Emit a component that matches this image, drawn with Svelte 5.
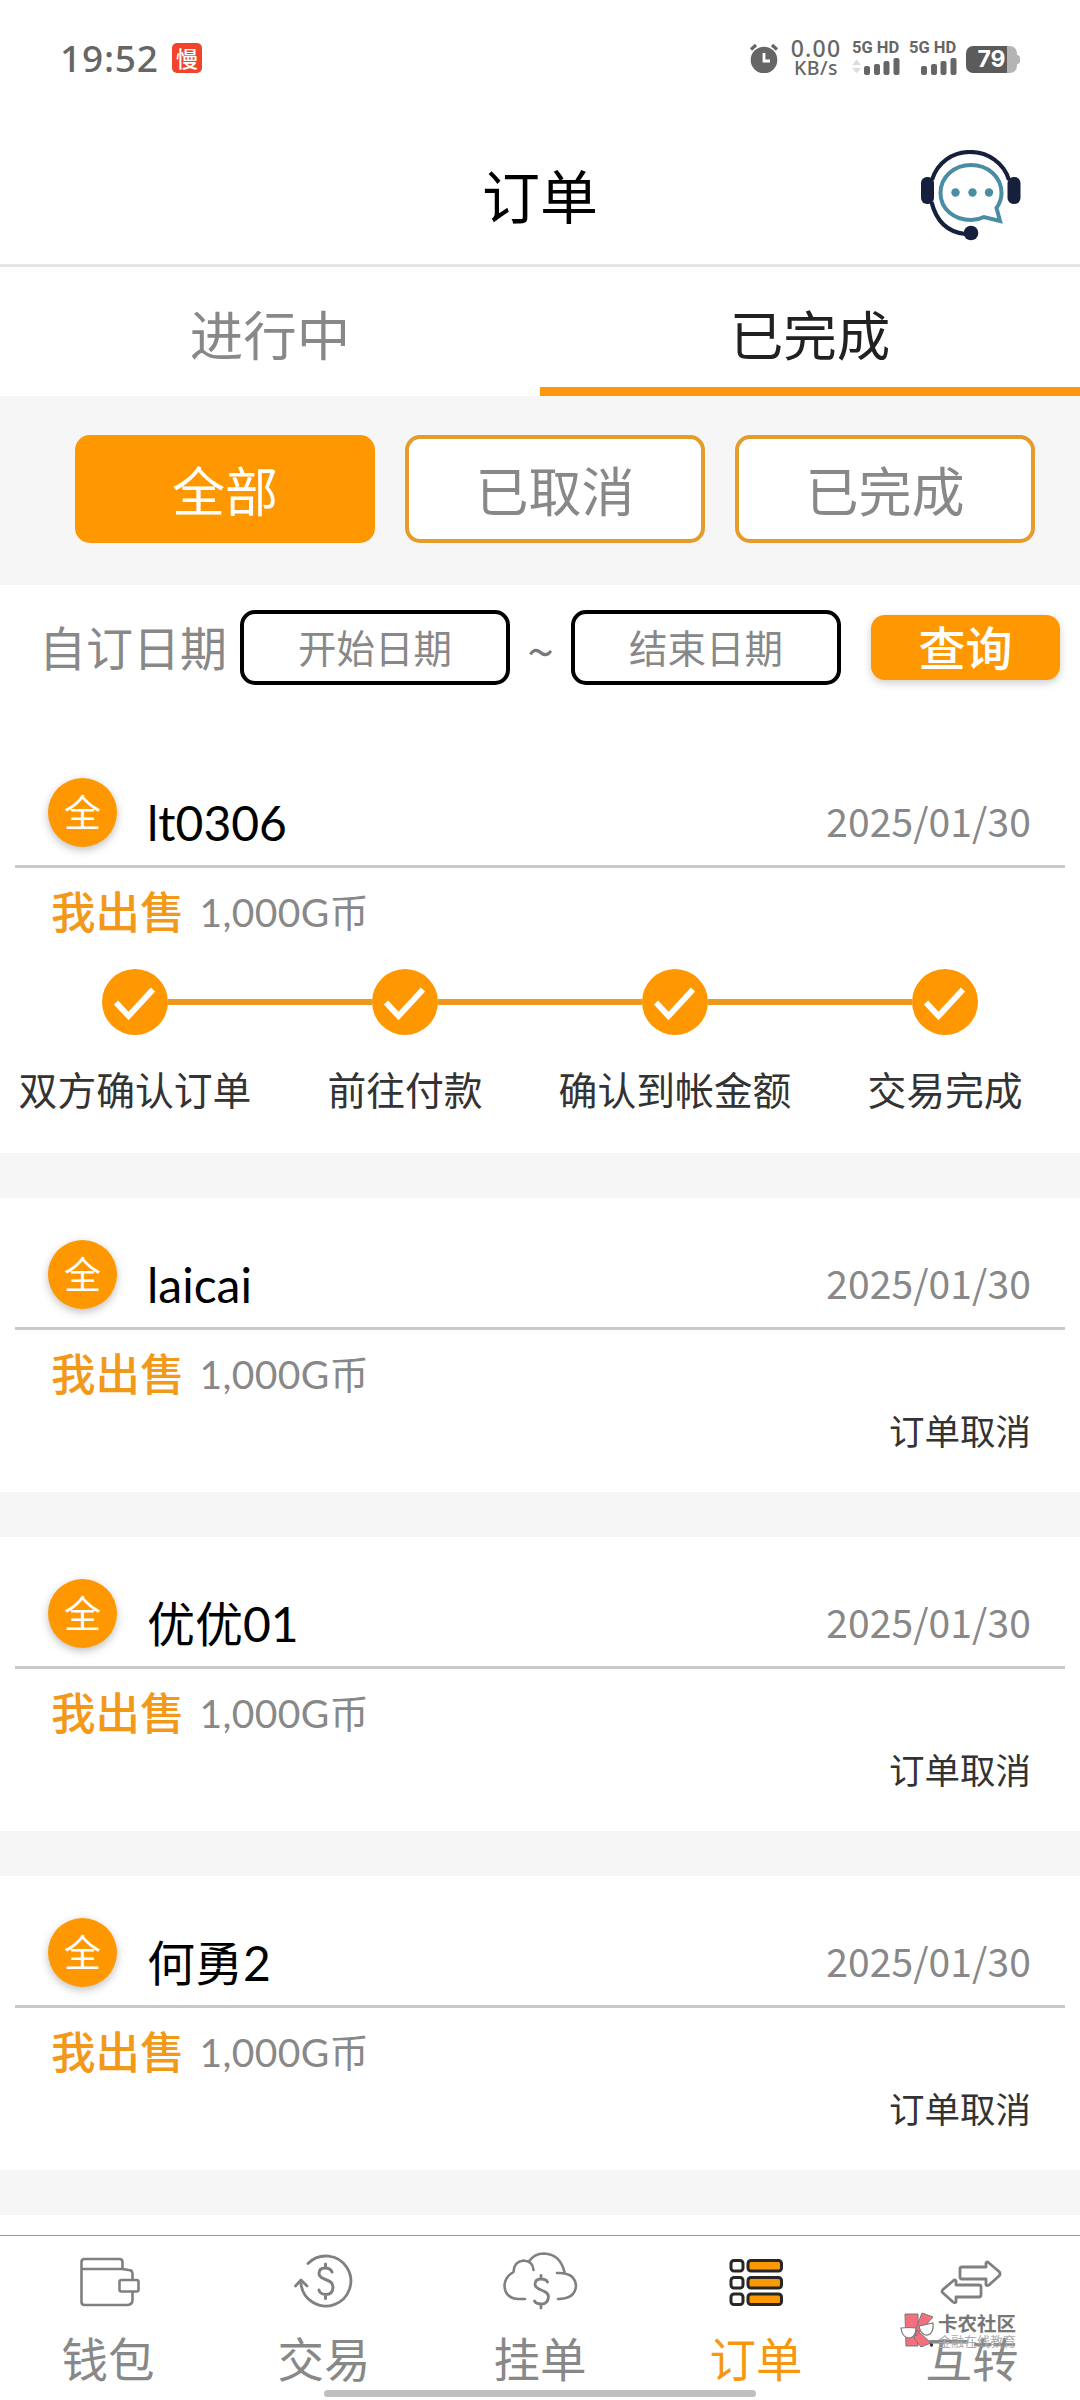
<script>
  let activeTab = 'done';
  let activeFilter = 'all';
  let activeNav = 'orders';

  const tabs = [
    { id: 'progress', label: '进行中' },
    { id: 'done', label: '已完成' }
  ];

  const filters = [
    { id: 'all', label: '全部' },
    { id: 'cancelled', label: '已取消' },
    { id: 'finished', label: '已完成' }
  ];

  const steps = ['双方确认订单', '前往付款', '确认到帐金额', '交易完成'];

  const orders = [
    { name: 'lt0306', date: '2025/01/30', amount: '1,000G币', completed: true },
    { name: 'laicai', date: '2025/01/30', amount: '1,000G币', completed: false },
    { name: '优优01', date: '2025/01/30', amount: '1,000G币', completed: false },
    { name: '何勇2', date: '2025/01/30', amount: '1,000G币', completed: false }
  ];

  const navItems = [
    { id: 'wallet', label: '钱包' },
    { id: 'trade', label: '交易' },
    { id: 'listing', label: '挂单' },
    { id: 'orders', label: '订单' },
    { id: 'transfer', label: '互转' }
  ];
</script>

<div class="screen">
  <div class="status">
    <span class="time">19:52</span>
    <span class="app-badge">慢</span>
    <div class="status-right">
      <svg class="alarm" width="30" height="30" viewBox="0 0 30 30">
        <circle cx="15" cy="17" r="13.3" fill="#666" />
        <path d="M2 6.500 7 2M28 6.500 23 2" stroke="#666" stroke-width="3.200" fill="none" />
        <path d="M15 10v8h6" stroke="#fff" stroke-width="2.800" fill="none" />
      </svg>
      <div class="speed"><b>0.00</b><span>KB/s</span></div>
      {#each [true, false] as data}
        <div class="signal">
          <span>5G HD</span>
          <svg width="48" height="17" viewBox="0 0 48 17">
            {#if data}
              <path d="M0 7 4.500 1.500 9 7zM0 10 4.500 15.500 9 10z" fill="#ddd" />
            {/if}
            <rect x="12" y="8" width="6" height="9" rx="2" fill="#666" />
            <rect x="22" y="6" width="6" height="11" rx="2" fill="#666" />
            <rect x="31.500" y="3" width="6" height="14" rx="2" fill="#666" />
            <rect x="41.500" y="0" width="6" height="17" rx="2" fill="#666" />
          </svg>
        </div>
      {/each}
      <div class="battery"><span>79</span></div>
    </div>
  </div>

  <header>
    <h1>订单</h1>
    <svg class="service" width="100" height="92" viewBox="0 0 100 92">
      <path d="M11 30C16 13 31 2 49 2s34 11 39 28" fill="none" stroke="#16203c" stroke-width="4.200" />
      <path d="M10.500 52C15 70 26 82 44 84" fill="none" stroke="#16203c" stroke-width="4.200" />
      <rect x="0" y="27" width="13" height="27" rx="6" fill="#16203c" />
      <rect x="86.500" y="27" width="13" height="27" rx="6" fill="#16203c" />
      <circle cx="50" cy="83" r="7.300" fill="#16203c" />
      <path d="M75.500 58C79 53 80.500 48 80.500 43 80.500 27 67 15 50 15S19.500 27 19.500 43 33 70 50 70c5 0 9-1 13-3l16 4z" fill="none" stroke="#4a8ca4" stroke-width="4" />
      <circle cx="34.500" cy="42.500" r="4.200" fill="#4a8ca4" />
      <circle cx="51.500" cy="42.500" r="4.200" fill="#4a8ca4" />
      <circle cx="68" cy="42.500" r="4.200" fill="#4a8ca4" />
    </svg>
  </header>

  <div class="tabs">
    {#each tabs as tab}
      <button class:active={activeTab === tab.id} on:click={() => (activeTab = tab.id)}>{tab.label}</button>
    {/each}
  </div>

  <div class="filters">
    {#each filters as filter}
      <button class:active={activeFilter === filter.id} on:click={() => (activeFilter = filter.id)}>
        {filter.label}
      </button>
    {/each}
  </div>

  <div class="date-row">
    <span class="date-label">自订日期</span>
    <button class="date-input">开始日期</button>
    <span class="tilde">~</span>
    <button class="date-input">结束日期</button>
    <button class="search">查询</button>
  </div>

  <main>
    {#each orders as order}
      <section class="order">
        <div class="order-head">
          <span class="avatar">全</span>
          <span class="name">{order.name}</span>
          <span class="date">{order.date}</span>
        </div>
        <div class="order-type">
          <b>我出售</b>
          <span>{order.amount}</span>
        </div>
        {#if order.completed}
          <div class="steps">
            {#each steps as step}
              <div class="step">
                <div class="track">
                  <i class="line"></i>
                  <svg width="66" height="66" viewBox="0 0 66 66">
                    <circle cx="33" cy="33" r="33" fill="#ff9800" />
                    <path d="M14 33.500 26.500 47 51 20.500" fill="none" stroke="#fff" stroke-width="5.800" />
                  </svg>
                  <i class="line"></i>
                </div>
                <span>{step}</span>
              </div>
            {/each}
          </div>
        {:else}
          <div class="cancelled">订单取消</div>
        {/if}
      </section>
    {/each}
  </main>

  <nav>
    {#each navItems as item}
      <button class:active={activeNav === item.id} on:click={() => (activeNav = item.id)}>
        <svg width="80" height="60" viewBox="0 0 80 60" fill="none" stroke="#808080" stroke-width="2.600" stroke-linecap="round" stroke-linejoin="round">
          {#if item.id === 'wallet'}
            <path d="M14 20V12q0-3 3-3H52q3 0 3 3v7M55 19H14V52q0 3 3 3H59q6 0 6-5V42M65 30V24q0-4-4-4l-6-1" transform="translate(-0.500 0)" />
            <rect x="51.500" y="30" width="19" height="11.500" rx="2" />
          {:else if item.id === 'trade'}
            <path d="M24 13.500A25 25 0 1 1 17 34M11.500 36 17 30 23 36" stroke-width="2.800" />
            <path d="M48 22Q46.500 18 41 18 35 18 35 23.500C35 31 49 28 49 37 49 43 45 44.500 41.500 44.500 36 44.500 35 40 35 40M41.500 14v4M41.500 44.500v4" stroke-width="3" />
          {:else if item.id === 'listing'}
            <path d="M25 49H18Q4.500 48 4.500 35 5 27 13.500 22 14 11.500 23.500 10.500 33 11 33.500 20M28.500 12Q34 3.500 44 3.500 60 4 64.500 22M57 23Q75 22 76 36 75 49 58 49" />
            <path d="M47.500 32Q46 29 41 29 35 29 35 34.500C35 41 48.500 39 48.500 47 48 52 45 54 41.500 54 36 54 34.500 51 34.500 51M41 25.500v3M41 54v4" stroke-width="2.800" />
          {:else if item.id === 'orders'}
            <g stroke="#282725" stroke-width="3">
              {#each [10.500, 27.500, 44] as y}
                <rect x="15" {y} width="12" height="10.500" rx="3" />
                <rect x="32" {y} width="33.500" height="10.500" rx="3" fill="#fb9900" />
              {/each}
            </g>
          {:else}
            <path d="M30 17H54V13q1-2 3 0L67.500 22q1 2 0 3.500L57 35q-2 1-3 0V29H30q-2 0-2-2V19q0-2 2-2zM47 35H24V31q-1-2-3 0L11 39.500q-2 2 0 3.500L21 52q2 1.500 3 0V47H47q2 0 2-2V37q0-2-2-2z" stroke-width="2.800" />
          {/if}
        </svg>
        <span>{item.label}</span>
      </button>
    {/each}
  </nav>

  <div class="community">
    <svg width="36" height="38" viewBox="0 0 36 38">
      <g fill="#f5707f" stroke="#777" stroke-width="1">
        <path d="M5 3h13v32H6z" />
        <path d="M22 2 33 6 16 25 14 22zM17 19 31 32 21 36 14 27z" />
      </g>
      <path d="M1 17q7-1 15 0 0 10-7.500 10Q2 26 1 17zM19 15l14-3q1 10-5 12-7 1-9-9z" fill="#fff" stroke="#777" stroke-width="1.200" />
      <circle cx="31.500" cy="34" r="1.700" fill="#333" />
    </svg>
    <div>
      <b>卡农社区</b>
      <small>金融在线教育</small>
    </div>
  </div>

  <div class="home-bar"></div>
</div>

<style>
  :global(body) {
    background: #fff;
  }

  .screen {
    position: relative;
    display: flex;
    flex-direction: column;
    width: 1080px;
    height: 2400px;
    overflow: hidden;
    background: #fff;
    color: #333;
    font-family: "Noto Sans CJK SC", sans-serif;
  }

  button {
    margin: 0;
    padding: 0;
    border: none;
    background: none;
    font-family: inherit;
    color: #888;
    cursor: pointer;
  }

  svg {
    display: block;
    flex: none;
  }

  .status {
    display: flex;
    align-items: center;
    height: 116px;
    padding: 0 60px;
    box-sizing: border-box;
    color: #666;
  }

  .time {
    width: 112px;
    padding-bottom: 2px;
    font: 500 37px "Noto Sans", sans-serif;
    letter-spacing: 0.8px;
  }

  .app-badge {
    width: 30px;
    height: 30px;
    border-radius: 5px;
    background: #f0452a;
    color: #fff;
    font-size: 22px;
    font-weight: 500;
    line-height: 28px;
    text-align: center;
  }

  .status-right {
    display: flex;
    align-items: center;
    margin-left: auto;
    font-family: "Noto Sans", sans-serif;
  }

  .alarm {
    margin-right: 10px;
  }

  .speed {
    display: flex;
    flex-direction: column;
    align-items: center;
    width: 54px;
  }

  .speed b {
    font-size: 23px;
    font-weight: 500;
    line-height: 19px;
    letter-spacing: 1.2px;
  }

  .speed span {
    font-size: 19.5px;
    font-weight: 500;
    line-height: 19px;
    letter-spacing: 0.5px;
  }

  .signal {
    display: flex;
    flex-direction: column;
    gap: 4px;
    width: 48px;
    margin-left: 9px;
  }

  .signal span {
    font: 700 16.5px/13px Roboto, sans-serif;
    white-space: nowrap;
  }

  .battery {
    position: relative;
    width: 51px;
    height: 27px;
    margin: 2px 3px 0 9px;
    border-radius: 7px;
    background: linear-gradient(90deg, #5b5b5b 80%, #b4b4b4 80%);
    color: #fff;
    font: 700 23px/27px Inter, sans-serif;
    text-align: center;
  }

  .battery::after {
    content: "";
    position: absolute;
    right: -3px;
    top: 9px;
    width: 3px;
    height: 9px;
    border-radius: 0 3px 3px 0;
    background: #b4b4b4;
  }

  header {
    display: grid;
    grid-template-columns: 1fr auto 1fr;
    align-items: center;
    height: 151px;
    padding: 0 59px;
    box-sizing: border-box;
    border-bottom: 3px solid #e5e5e5;
  }

  h1 {
    grid-column: 2;
    margin: 0;
    padding-top: 7px;
    font-size: 58px;
    font-weight: 400;
    line-height: 84px;
    color: #000;
  }

  .service {
    justify-self: end;
    margin-top: 12px;
  }

  .tabs {
    display: flex;
    height: 129px;
  }

  .tabs button {
    flex: 1;
    padding-top: 12px;
    border-bottom: 9px solid transparent;
    font-size: 53.5px;
    line-height: 108px;
  }

  .tabs .active {
    border-color: #ff9711;
    color: #212121;
  }

  .filters {
    display: flex;
    gap: 30px;
    height: 189px;
    padding: 39px 45px 42px 75px;
    box-sizing: border-box;
    background: #f6f6f7;
  }

  .filters button {
    flex: 1;
    border: 4px solid #e59c2b;
    border-radius: 15px;
    background: #fff;
    font-size: 53px;
    line-height: 98px;
  }

  .filters .active {
    border-color: #ff9800;
    background: #ff9800;
    color: #fff;
  }

  .date-row {
    display: flex;
    align-items: center;
    height: 151px;
    padding: 0 20px 26px 39px;
    box-sizing: border-box;
  }

  .date-label {
    width: 201px;
    padding-bottom: 3px;
    font-size: 47px;
    line-height: 68px;
    color: #888;
    white-space: nowrap;
  }

  .date-input {
    width: 270px;
    height: 75px;
    padding-bottom: 3px;
    border: 4px solid #000;
    border-radius: 15px;
    font-size: 38.5px;
    line-height: 60px;
  }

  .tilde {
    width: 61px;
    padding-top: 2px;
    font-size: 48px;
    line-height: 68px;
    text-align: center;
    color: #777;
  }

  .search {
    width: 189px;
    height: 65px;
    margin-left: auto;
    padding-bottom: 3px;
    border-radius: 14px;
    background: #ff9800;
    box-shadow: 0 3px 8px rgba(0, 0, 0, 0.2);
    color: #fff;
    font-size: 47px;
    font-weight: 500;
    line-height: 58px;
  }

  main {
    flex: 1;
    overflow: hidden;
  }

  .order {
    height: 294px;
    border-bottom: 45px solid #f6f6f6;
  }

  .order:first-child {
    height: 417px;
  }

  .order-head {
    display: flex;
    align-items: flex-start;
    height: 132px;
    margin: 0 15px;
    padding: 42px 34px 0 33px;
    box-sizing: border-box;
    border-bottom: 3px solid #c9c9c9;
  }

  .avatar {
    width: 69px;
    height: 69px;
    border-radius: 50%;
    background: #ff9800;
    box-shadow: 0 3px 8px rgba(0, 0, 0, 0.25);
    color: #fff;
    font-size: 37px;
    line-height: 67px;
    text-align: center;
  }

  .name {
    padding: 10px 0 0 30px;
    font-family: Lato, "Noto Sans CJK SC", sans-serif;
    font-size: 48px;
    line-height: 70px;
    color: #000;
  }

  .date {
    margin-left: auto;
    padding-top: 14px;
    font-size: 39px;
    line-height: 56px;
    letter-spacing: 0.1px;
    color: #888;
  }

  .order-type {
    display: flex;
    align-items: center;
    gap: 15px;
    height: 84px;
    padding-left: 51px;
    line-height: 82px;
  }

  .order-type b {
    font-size: 44.5px;
    font-weight: 500;
    color: #f3991a;
  }

  .order-type span {
    padding-top: 3px;
    font-family: Lato, "Noto Sans CJK SC", sans-serif;
    font-size: 39px;
    letter-spacing: 0.4px;
    color: #888;
  }

  .steps {
    display: flex;
    padding-top: 17px;
  }

  .step {
    width: 270px;
    text-align: center;
  }

  .step span {
    display: block;
    padding-top: 25px;
    font-size: 38.8px;
    line-height: 56px;
  }

  .track {
    display: flex;
    align-items: center;
  }

  .line {
    flex: 1;
    height: 6px;
    background: #ee991c;
  }

  .step:first-child .line:first-child,
  .step:last-child .line:last-child {
    background: none;
  }

  .cancelled {
    padding: 1px 49px 0 0;
    font-size: 35.5px;
    line-height: 30px;
    text-align: right;
  }

  nav {
    display: flex;
    height: 165px;
    box-sizing: border-box;
    border-top: 1px solid #999;
    background: #fff;
  }

  nav button {
    display: flex;
    flex: 1;
    flex-direction: column;
    align-items: center;
    padding-top: 14px;
  }

  nav button span {
    padding-top: 13px;
    font-size: 46.5px;
    line-height: 68px;
  }

  nav .active span {
    color: #f5980f;
  }

  .community {
    position: absolute;
    left: 900px;
    top: 2311px;
    display: flex;
    gap: 2px;
    color: #777;
  }

  .community div {
    display: flex;
    flex-direction: column;
  }

  .community b {
    font-size: 19.5px;
    line-height: 24px;
  }

  .community small {
    font-size: 13px;
    line-height: 12px;
    color: #aaa;
  }

  .home-bar {
    position: absolute;
    left: 324px;
    bottom: 3px;
    width: 432px;
    height: 7px;
    border-radius: 4px;
    background: #bfbfbf;
  }
</style>
